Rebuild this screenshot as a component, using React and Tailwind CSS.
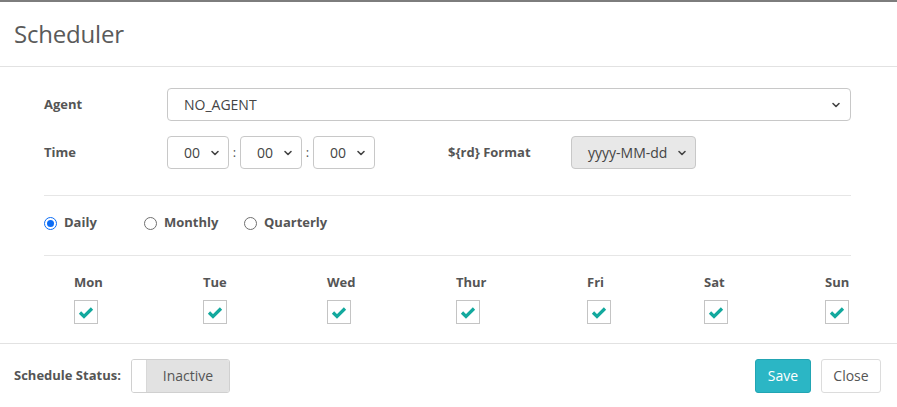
import { ChevronDown } from 'lucide-react';

// column widths measured so each day lands where it does on the real form
const DAYS = [
  { label: 'Mon', w: 'w-[129px]' },
  { label: 'Tue', w: 'w-[124px]' },
  { label: 'Wed', w: 'w-[129px]' },
  { label: 'Thur', w: 'w-[131px]' },
  { label: 'Fri', w: 'w-[117px]' },
  { label: 'Sat', w: 'w-[121px]' },
  { label: 'Sun', w: 'w-[24px]' },
];

function FakeSelect({ value, className = '', disabled = false }) {
  return (
    <div
      className={`h-[33px] flex items-center justify-between rounded-[4px] border border-[#c8c8c8] text-[14px] text-[#444] ${
        disabled ? 'bg-[#e8e8e8]' : 'bg-white'
      } ${className}`}
    >
      <span>{value}</span>
      <ChevronDown className="w-[12px] h-[12px] text-[#444]" strokeWidth={3.2} />
    </div>
  );
}

function Radio({ label, checked }) {
  return (
    <label className="w-[100px] flex items-center gap-[7px]">
      {checked ? (
        <span className="w-[13px] h-[13px] rounded-full border-[1.5px] border-[#0b6cf5] flex items-center justify-center">
          <span className="w-[7px] h-[7px] rounded-full bg-[#0b6cf5]" />
        </span>
      ) : (
        <span className="w-[13px] h-[13px] rounded-full border border-[#6f6f6f] bg-white" />
      )}
      <span className="text-[13px] font-bold text-[#555]">{label}</span>
    </label>
  );
}

function CheckBox() {
  return (
    <span className="mt-[9px] w-[24px] h-[24px] border border-[#c4c4c4] bg-white flex items-center justify-center">
      <svg width="18" height="18" viewBox="0 0 18 18" className="mt-[2px]">
        <polyline points="3,8.5 7,12.5 15,4.5" fill="none" stroke="#13a99e" strokeWidth="3.2" />
      </svg>
    </span>
  );
}

export default function App() {
  return (
    <div className="w-[897px] h-[407px] bg-white font-['Open_Sans',sans-serif] text-[#555] overflow-hidden">
      {/* page behind the modal */}
      <div className="h-[2px] bg-[#7d7d7d]" />

      {/* Header */}
      <div className="h-[65px] flex items-center px-[14px] border-b border-[#e2e2e2]">
        <h2 className="text-[24px] font-normal text-[#5a5a5a] leading-none tracking-[-0.2px]">Scheduler</h2>
      </div>

      {/* Body */}
      <div className="pl-[44px] pr-[46px] pt-[21px]">
        <div className="flex items-center">
          <span className="w-[123px] text-[13px] font-bold">Agent</span>
          <FakeSelect value="NO_AGENT" className="flex-1 pl-[16px] pr-[8px]" />
        </div>

        <div className="flex items-center mt-[15px]">
          <span className="w-[123px] text-[13px] font-bold">Time</span>
          <div className="w-[281px] flex items-center">
            <FakeSelect value="00" className="w-[62px] pl-[16px] pr-[7px]" />
            <span className="w-[11px] text-center text-[13px]">:</span>
            <FakeSelect value="00" className="w-[62px] pl-[16px] pr-[7px]" />
            <span className="w-[11px] text-center text-[13px]">:</span>
            <FakeSelect value="00" className="w-[62px] pl-[16px] pr-[7px]" />
          </div>
          <span className="w-[123px] text-[13px] font-bold">${'{rd}'} Format</span>
          <FakeSelect value="yyyy-MM-dd" disabled className="w-[125px] pl-[16px] pr-[7px]" />
        </div>

        <div className="mt-[26px] border-t border-[#e6e6e6]" />

        <div className="pt-[18px] pb-[23px] h-[59px] flex items-center">
          <Radio label="Daily" checked />
          <Radio label="Monthly" />
          <Radio label="Quarterly" />
        </div>

        <div className="border-t border-[#e6e6e6]" />

        <div className="pt-[17px] pb-[19px] pl-[30px] flex">
          {DAYS.map(d => (
            <div key={d.label} className={`${d.w} flex flex-col items-start`}>
              <span className="h-[18px] leading-[18px] text-[13px] font-bold">{d.label}</span>
              <CheckBox />
            </div>
          ))}
        </div>
      </div>

      {/* Footer */}
      <div className="border-t border-[#e2e2e2] h-[64px] flex items-center justify-between pl-[14px] pr-[16px]">
        <div className="flex items-center">
          <span className="text-[13px] font-bold w-[117px]">Schedule Status:</span>
          <div className="h-[34px] w-[99px] flex rounded-[3px] border border-[#d0d0d0] overflow-hidden">
            <span className="w-[15px] bg-white border-r border-[#d8d8d8]" />
            <span className="flex-1 bg-[#e2e2e2] flex items-center justify-center text-[14px] text-[#555]">
              Inactive
            </span>
          </div>
        </div>
        <div className="flex items-center gap-[10px]">
          <button className="h-[34px] w-[56px] rounded-[3px] bg-[#2bb6c5] border border-[#22a5b3] text-white text-[14px]">
            Save
          </button>
          <button className="h-[34px] w-[60px] rounded-[3px] bg-white border border-[#dcdcdc] text-[#555] text-[14px]">
            Close
          </button>
        </div>
      </div>
    </div>
  );
}
